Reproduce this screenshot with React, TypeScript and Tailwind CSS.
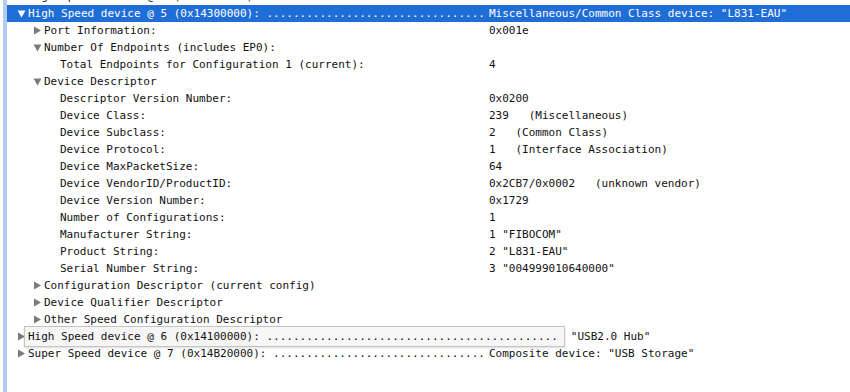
import React from "react";

type Row = {
  level: number;
  tri?: "open" | "closed";
  label: string;
  value?: string;
  selected?: boolean;
  tooltip?: boolean;
};

/* pads a device line with dot leaders up to the value column (70 chars) */
const lead = (label: string) => label + " " + ".".repeat(70 - label.length - 2) + " ";

const rows: Row[] = [
  { level: 0, tri: "closed", label: lead("High Speed device @ 4 (0x14200000):"), value: 'Hub device: "USB3.0 Hub"' },
  {
    level: 0,
    tri: "open",
    selected: true,
    label: lead("High Speed device @ 5 (0x14300000):"),
    value: 'Miscellaneous/Common Class device: "L831-EAU"',
  },
  { level: 1, tri: "closed", label: "Port Information:", value: "0x001e" },
  { level: 1, tri: "open", label: "Number Of Endpoints (includes EP0):" },
  { level: 2, label: "Total Endpoints for Configuration 1 (current):", value: "4" },
  { level: 1, tri: "open", label: "Device Descriptor" },
  { level: 2, label: "Descriptor Version Number:", value: "0x0200" },
  { level: 2, label: "Device Class:", value: "239   (Miscellaneous)" },
  { level: 2, label: "Device Subclass:", value: "2   (Common Class)" },
  { level: 2, label: "Device Protocol:", value: "1   (Interface Association)" },
  { level: 2, label: "Device MaxPacketSize:", value: "64" },
  { level: 2, label: "Device VendorID/ProductID:", value: "0x2CB7/0x0002   (unknown vendor)" },
  { level: 2, label: "Device Version Number:", value: "0x1729" },
  { level: 2, label: "Number of Configurations:", value: "1" },
  { level: 2, label: "Manufacturer String:", value: '1 "FIBOCOM"' },
  { level: 2, label: "Product String:", value: '2 "L831-EAU"' },
  { level: 2, label: "Serial Number String:", value: '3 "004999010640000"' },
  { level: 1, tri: "closed", label: "Configuration Descriptor (current config)" },
  { level: 1, tri: "closed", label: "Device Qualifier Descriptor" },
  { level: 1, tri: "closed", label: "Other Speed Configuration Descriptor" },
  {
    level: 0,
    tri: "closed",
    tooltip: true,
    label: "High Speed device @ 6 (0x14100000): " + ".".repeat(44),
    value: '"USB2.0 Hub"',
  },
  { level: 0, tri: "closed", label: lead("Super Speed device @ 7 (0x14B20000):"), value: 'Composite device: "USB Storage"' },
];

function Triangle({ open, color }: { open: boolean; color: string }) {
  return (
    <svg width="9" height="9" viewBox="0 0 9 9" className="shrink-0">
      {open ? <path d="M0.5 1.5 H8.5 L4.5 8.5 Z" fill={color} /> : <path d="M1 0.5 L8 4.5 L1 8.5 Z" fill={color} />}
    </svg>
  );
}

function TreeRow({ row }: { row: Row }) {
  const indent = 10 + row.level * 16;
  const base = row.selected ? "bg-[#1f6dd6] text-white" : "text-[#111]";

  /* expansion tooltip: the full label shown in a box that runs past the value column */
  if (row.tooltip) {
    return (
      <div className="flex h-[17px] items-center whitespace-pre text-[#111]" style={{ paddingLeft: indent }}>
        <div className="flex w-[7px] shrink-0 items-center">
          <Triangle open={false} color="#7a7a7a" />
        </div>
        <div className="my-[-2px] flex h-[21px] shrink-0 items-center border border-[#c4c4c4] bg-[#f6f6f6] pl-[3px] pr-[6px] shadow-[0_1px_2px_rgba(0,0,0,0.15)]">
          {row.label}
        </div>
        <span className="ml-[6px]">{row.value}</span>
      </div>
    );
  }

  return (
    <div className={`flex h-[17px] items-center whitespace-pre ${base}`}>
      <div className="flex w-[482px] shrink-0 items-center overflow-hidden" style={{ paddingLeft: indent }}>
        <div className="flex w-[11px] shrink-0 items-center">
          {row.tri && <Triangle open={row.tri === "open"} color={row.selected ? "#ffffff" : "#7a7a7a"} />}
        </div>
        <span>{row.label}</span>
      </div>
      {row.value && <span>{row.value}</span>}
    </div>
  );
}

export default function App() {
  return (
    <div className="flex h-[392px] w-[850px] overflow-hidden bg-white font-['DejaVu_Sans_Mono','Liberation_Mono',monospace] text-[11px] leading-[17px]">
      <div className="w-[3px] shrink-0 bg-white" />
      <div className="w-[4px] shrink-0 bg-[#b3cbec]" />
      <div className="min-w-0 flex-1 pt-px">
        <div className="mt-[-13px]">
          {rows.map((r, i) => (
            <TreeRow key={i} row={r} />
          ))}
        </div>
      </div>
    </div>
  );
}
